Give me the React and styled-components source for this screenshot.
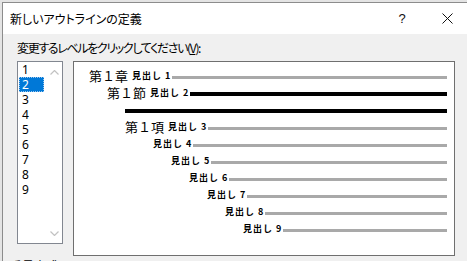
import React from 'react';
import styled, { createGlobalStyle } from 'styled-components';

const GlobalStyle = createGlobalStyle`
  html, body {
    margin: 0;
    padding: 0;
    background: #e4e4e4;
    overflow: hidden;
  }
  body {
    font-family: "Noto Sans CJK JP", "Noto Sans", sans-serif;
    color: #000;
  }
`;

const Page = styled.div`
  width: 467px;
  height: 261px;
  padding: 2px 0 0 2px;
  box-sizing: border-box;
  overflow: hidden;
`;

const Dialog = styled.div`
  width: 464px;
  height: 270px;
  border-left: 1px solid #8c8c8c;
  border-top: 1px solid #8c8c8c;
  background: #f0f0f0;
  display: flex;
  flex-direction: column;
`;

const TitleBar = styled.div`
  height: 31px;
  background: #fff;
  display: flex;
  align-items: center;
  padding-left: 7px;
  flex-shrink: 0;
`;

const Title = styled.div`
  flex: 1;
  font-size: 12px;
  line-height: 16px;
  font-feature-settings: "palt";
`;

const HelpButton = styled.div`
  width: 12px;
  margin-right: 19px;
  font-family: "Liberation Sans", sans-serif;
  font-size: 13px;
  text-align: center;
  line-height: 16px;
  color: #111;
`;

const CloseButton = styled.div`
  width: 40px;
  display: flex;
  justify-content: center;
  align-items: center;
`;

const Body = styled.div`
  padding: 6px 0 0 14px;
`;

const Label = styled.div`
  font-size: 12px;
  line-height: 16px;
  font-feature-settings: "palt";
  letter-spacing: -1.35px;
  u {
    text-underline-offset: 1px;
  }
`;

const Row = styled.div`
  display: flex;
  align-items: flex-start;
  margin-top: 5px;
`;

const ListBox = styled.div`
  width: 44px;
  height: 181px;
  border: 1px solid #828790;
  background: #fff;
  display: flex;
`;

const Items = styled.div`
  width: 27px;
  padding-left: 1px;
`;

const Item = styled.div`
  height: 15px;
  width: 25px;
  line-height: 15px;
  font-family: "Noto Sans", sans-serif;
  font-size: 12px;
  padding-left: 3px;
  box-sizing: border-box;
  background: ${(p) => (p.$selected ? '#0078d7' : 'transparent')};
  color: ${(p) => (p.$selected ? '#fff' : '#000')};
  outline: ${(p) => (p.$selected ? '1px dotted #9cc7ee' : 'none')};
  outline-offset: -1px;
`;

const ScrollBar = styled.div`
  flex: 1;
  display: flex;
  flex-direction: column;
  justify-content: space-between;
  align-items: center;
  padding: 8px 0 7px;
`;

const Preview = styled.div`
  margin-left: 10px;
  width: 373px;
  height: 188px;
  border: 1px solid #6f6f6f;
  background: #fff;
  padding: 5px 7px 0 0;
  box-sizing: content-box;
`;

const Level = styled.div`
  height: 17px;
  display: flex;
  align-items: center;
  padding-left: ${(p) => p.$indent}px;
`;

const Number = styled.span`
  font-size: 13px;
  line-height: 17px;
  white-space: nowrap;
  margin-right: 4px;
`;

const Heading = styled.span`
  font-size: 9px;
  font-weight: 700;
  letter-spacing: 1px;
  line-height: 17px;
  white-space: nowrap;
`;

const Rule = styled.div`
  flex: 1;
  height: ${(p) => (p.$bold ? 4 : 3)}px;
  background: ${(p) => (p.$bold ? '#000' : '#a9a9a9')};
  margin-top: 3px;
  margin-left: ${(p) => p.$gap}px;
`;

const Footer = styled.div`
  margin: 2px 0 0 -7px;
  font-size: 12px;
  line-height: 16px;
`;

const Chevron = ({ up }) => (
  <svg width="9" height="5" viewBox="0 0 9 5">
    <polyline
      points={up ? '0.5,4.5 4.5,0.5 8.5,4.5' : '0.5,0.5 4.5,4.5 8.5,0.5'}
      fill="none"
      stroke="#c2c2c2"
      strokeWidth="1.2"
    />
  </svg>
);

const CloseIcon = () => (
  <svg width="11" height="11" viewBox="0 0 11 11">
    <path d="M0.5 0.5 L10.5 10.5 M10.5 0.5 L0.5 10.5" stroke="#111" strokeWidth="1" fill="none" />
  </svg>
);

const levels = [
  { indent: 15, num: '第１章', label: '見出し 1' },
  { indent: 33, num: '第１節', label: '見出し 2', bold: true },
  { indent: 51, bold: true, ruleOnly: true },
  { indent: 51, num: '第１項', label: '見出し 3' },
  { indent: 79, label: '見出し 4' },
  { indent: 97, label: '見出し 5' },
  { indent: 115, label: '見出し 6' },
  { indent: 133, label: '見出し 7' },
  { indent: 151, label: '見出し 8' },
  { indent: 169, label: '見出し 9' },
];

export default function App() {
  return (
    <Page>
      <GlobalStyle />
      <Dialog>
        <TitleBar>
          <Title>新しいアウトラインの定義</Title>
          <HelpButton>?</HelpButton>
          <CloseButton>
            <CloseIcon />
          </CloseButton>
        </TitleBar>
        <Body>
          <Label>
            変更するレベルをクリックしてください(<u>V</u>):
          </Label>
          <Row>
            <ListBox>
              <Items>
                {[1, 2, 3, 4, 5, 6, 7, 8, 9].map((n) => (
                  <Item key={n} $selected={n === 2}>
                    {n}
                  </Item>
                ))}
              </Items>
              <ScrollBar>
                <Chevron up />
                <Chevron />
              </ScrollBar>
            </ListBox>
            <Preview>
              {levels.map((lv, i) => (
                <Level key={i} $indent={lv.indent}>
                  {lv.num && <Number>{lv.num}</Number>}
                  {lv.label && <Heading>{lv.label}</Heading>}
                  <Rule $bold={lv.bold} $gap={lv.ruleOnly ? 0 : 1} />
                </Level>
              ))}
            </Preview>
          </Row>
          <Footer>番号書式</Footer>
        </Body>
      </Dialog>
    </Page>
  );
}
